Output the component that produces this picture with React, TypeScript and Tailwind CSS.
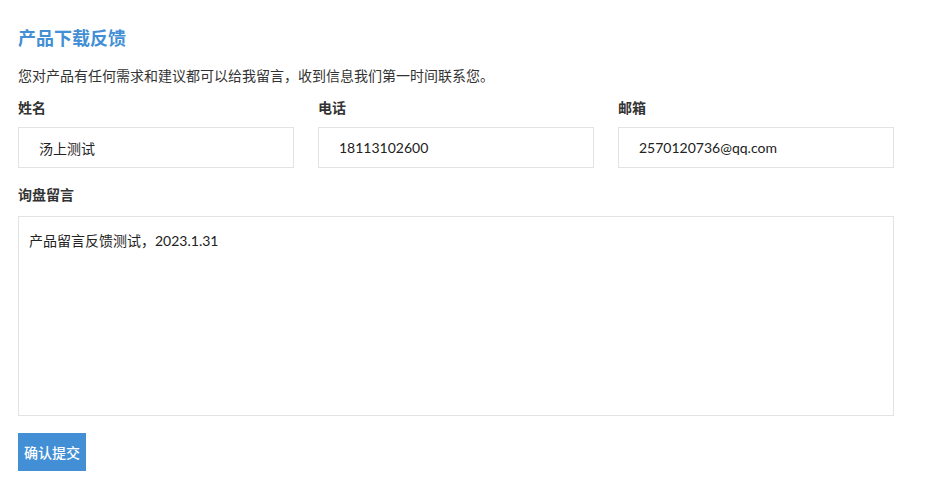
export default function App() {
  const font = { fontFamily: 'Lato, "Noto Sans CJK SC", sans-serif' };
  const fields = [
    { label: "姓名", value: "汤上测试" },
    { label: "电话", value: "18113102600" },
    { label: "邮箱", value: "2570120736@qq.com" },
  ];

  return (
    <div className="min-h-screen bg-white px-[18px] pt-[26px] text-[#333]" style={font}>
      <h2 className="text-[18px] font-bold leading-[24px] text-[#428fd5]">产品下载反馈</h2>
      <p className="mt-[16px] text-[14px] leading-[20px]">
        您对产品有任何需求和建议都可以给我留言，收到信息我们第一时间联系您。
      </p>

      <div className="mt-[12px] grid w-[876px] grid-cols-3 gap-x-6">
        {fields.map((f) => (
          <div key={f.label}>
            <label className="block text-[14px] font-semibold leading-[20px]">{f.label}</label>
            <input
              className="mt-[9px] h-[41px] w-full border border-[#e3e3e3] px-[20px] text-[14px] text-[#222] outline-none"
              defaultValue={f.value}
            />
          </div>
        ))}
      </div>

      <label className="mt-[17px] block text-[14px] font-semibold leading-[20px]">询盘留言</label>
      <textarea
        className="mt-[11px] block h-[200px] w-[876px] resize-none border border-[#e3e3e3] px-[10px] py-[14px] text-[14px] leading-[20px] text-[#222] outline-none"
        defaultValue="产品留言反馈测试，2023.1.31"
      />

      <button
        type="button"
        className="mt-[17px] h-[38px] w-[68px] bg-[#428fd5] text-[14px] font-medium text-white"
      >
        确认提交
      </button>
    </div>
  );
}
